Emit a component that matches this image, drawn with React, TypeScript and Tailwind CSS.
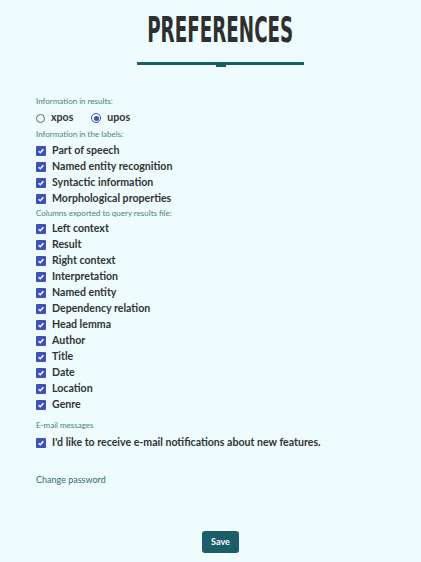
import { FC } from "react";

const labels = [
  "Part of speech",
  "Named entity recognition",
  "Syntactic information",
  "Morphological properties",
];

const columns = [
  "Left context",
  "Result",
  "Right context",
  "Interpretation",
  "Named entity",
  "Dependency relation",
  "Head lemma",
  "Author",
  "Title",
  "Date",
  "Location",
  "Genre",
];

const Check: FC<{ label: string }> = ({ label }) => (
  <label className="flex items-center gap-[6px] h-[16px]">
    <span className="flex items-center justify-center w-[10px] h-[10px] rounded-[1px] bg-[#3f51b5]">
      <svg width="8" height="8" viewBox="0 0 10 10">
        <path d="M2 5.2 L4.1 7.2 L8 2.8" fill="none" stroke="#fff" strokeWidth="1.8" />
      </svg>
    </span>
    <span className="text-[10.6px] font-bold text-[#333333]">{label}</span>
  </label>
);

const SectionLabel: FC<{ text: string; className?: string }> = ({ text, className }) => (
  <p className={"text-[8px] text-[#4a7f8a] leading-[10px] " + (className ?? "")}>{text}</p>
);

export default function App() {
  return (
    <div className="min-h-[562px] bg-[#eefcfd] font-['Lato',sans-serif]">
      <div className="flex flex-col items-center pt-[10px] pl-[20px]">
        <h1 className="inline-block scale-x-[0.565] font-['DejaVu_Sans_Condensed',sans-serif] font-bold text-[36px] leading-[40px] text-[#2f2f2f]">
          PREFERENCES
        </h1>
        <div className="mt-[12px] flex flex-col items-center">
          <div className="w-[167px] h-[3px] bg-[#1b5e6a]" />
          <div className="w-[10px] h-[2px] bg-[#1b5e6a]" />
        </div>
      </div>

      <div className="px-[36px] pt-[26px]">
        <SectionLabel text="Information in results:" className="mt-[3px] mb-[4px]" />
        <div className="flex items-center h-[16px] gap-[6px]">
          <span className="w-[9px] h-[9px] rounded-full border border-[#666]" />
          <span className="text-[10.6px] font-bold text-[#333333] mr-[12px]">xpos</span>
          <span className="flex items-center justify-center w-[10px] h-[10px] rounded-full border border-[#3f51b5]">
            <span className="w-[5px] h-[5px] rounded-full bg-[#3f51b5]" />
          </span>
          <span className="text-[10.6px] font-bold text-[#333333]">upos</span>
        </div>
        <SectionLabel text="Information in the labels:" className="mt-[3px] mb-[4px]" />
        {labels.map((l) => (
          <Check key={l} label={l} />
        ))}
        <SectionLabel text="Columns exported to query results file:" className="mt-[1px] mb-[3px]" />
        {columns.map((c) => (
          <Check key={c} label={c} />
        ))}
        <SectionLabel text="E-mail messages" className="mt-[7px] mb-[5px]" />
        <Check label="I'd like to receive e-mail notifications about new features." />
        <a className="block mt-[23px] text-[9px] leading-[12px] text-[#2e6b78]">Change password</a>
      </div>

      <div className="flex justify-center pt-[45px] pb-[10px] pl-[20px]">
        <button className="w-[37px] h-[22px] rounded-[3px] bg-[#1b5e6a] text-white text-[9px] font-bold">
          Save
        </button>
      </div>
    </div>
  );
}
